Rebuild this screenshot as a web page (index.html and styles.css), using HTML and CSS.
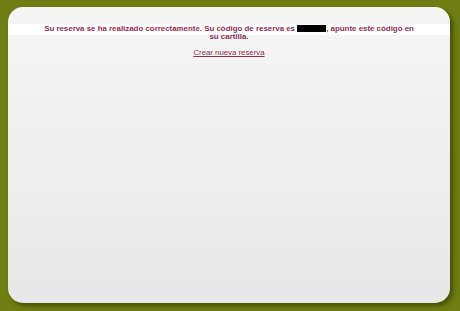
FILE: index.html
```html
<!DOCTYPE html>
<html lang="es">
<head>
    <meta charset="UTF-8">
    <title>Reserva</title>
    <link rel="stylesheet" href="styles.css">
</head>
<body>
    <div class="panel">
        <p class="mensaje">Su reserva se ha realizado correctamente. Su código de reserva es <span class="codigo"></span>, apunte este código en su cartilla.</p>
        <p class="acciones"><a href="#" class="enlace">Crear nueva reserva</a></p>
    </div>
</body>
</html>
```

FILE: styles.css
```css
html, body {
    height: 100%;
}
body {
    margin: 0;
    padding: 7px 10px 8px 8px;
    box-sizing: border-box;
    background-color: #6f7e12;
    font-family: "Liberation Sans", Arial, sans-serif;
}
.panel {
    height: 100%;
    border-radius: 15px;
    background:
        linear-gradient(transparent 17px, #ffffff 17px, #ffffff 28px, transparent 28px),
        linear-gradient(#f6f6f6, #e7e7e7);
    box-shadow: 3px 3px 4px rgba(40,50,0,0.6);
    padding-top: 18px;
    box-sizing: border-box;
}
.mensaje {
    margin: 0 auto;
    width: 372px;
    text-align: center;
    font-size: 7.9px;
    font-weight: bold;
    line-height: 8px;
    color: #8b2f55;
}
.codigo {
    display: inline-block;
    width: 29px;
    height: 7px;
    vertical-align: -1px;
    background-color: #000;
}
.acciones {
    margin: 7px 0 0;
    text-align: center;
    font-size: 7.8px;
}
.enlace {
    color: #8b2f55;
}
```
